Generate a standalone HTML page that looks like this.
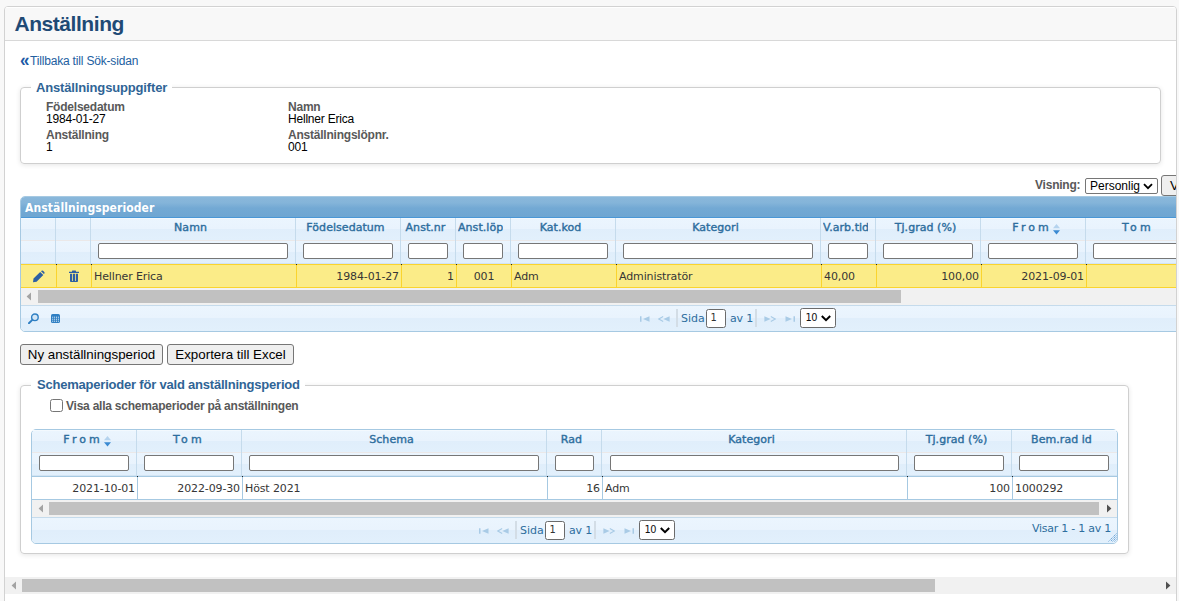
<!DOCTYPE html>
<html lang="sv">
<head>
<meta charset="utf-8">
<title>Anställning</title>
<style>
*{box-sizing:border-box}
html,body{margin:0;padding:0}
body{width:1179px;height:601px;overflow:hidden;background:#f8f8f8;font-family:"Liberation Sans",sans-serif;font-size:12px;color:#000;position:relative}
.abs{position:absolute}
#panel{position:absolute;left:4px;top:6px;width:1173px;height:620px;border:1px solid #d2d2d2;border-radius:4px;background:#fff;overflow:hidden}
#inner{position:absolute;left:-5px;top:-7px;width:1179px;height:601px}
#phead{position:absolute;left:5px;top:7px;width:1171px;height:34px;background:#f8f8f8;border-top:1px solid #fff;border-bottom:1px solid #d8d8d8}
h1{position:absolute;left:14.5px;top:12px;margin:0;font-size:21px;line-height:24px;font-weight:bold;color:#1f4a75;white-space:nowrap;letter-spacing:-0.45px}
a.back{position:absolute;left:30px;top:54px;font-size:12px;line-height:14px;color:#22609f;text-decoration:none;white-space:nowrap;letter-spacing:-0.18px}
a.back b{font-size:14px;font-weight:bold;color:#1f5a96}
.fs{position:absolute;border:1px solid #cfcfcf;border-radius:4px;box-shadow:0 1px 5px rgba(0,0,0,.10)}
.legend{position:absolute;background:#fff;font-weight:bold;font-size:13px;line-height:15px;color:#2f6496;white-space:nowrap;padding:0 5px;letter-spacing:-0.15px}
.lbl{position:absolute;font-weight:bold;color:#595959;font-size:12px;line-height:12px;white-space:nowrap;letter-spacing:-0.22px}
.val{position:absolute;color:#000;font-size:12px;line-height:12px;white-space:nowrap;letter-spacing:-0.2px}
.grid{font-family:"DejaVu Sans","Liberation Sans",sans-serif;font-size:11px}
.gbox{position:absolute;border:1px solid #a6c9e2;background:#fcfdfd}
.gtitle{position:absolute;background:linear-gradient(#8ab8db 0%,#84b4d9 30%,#73a9d4 55%,#6ea6d2 100%);border-bottom:1px solid #4a97d6;color:#fff;font-family:"DejaVu Sans Condensed","DejaVu Sans",sans-serif;font-weight:bold;font-size:12px;white-space:nowrap}
.hrow{position:absolute;background:linear-gradient(#ebf5fe 0%,#e9f3fd 49%,#e0eefb 50%,#e2f0fc 100%)}
.hsep{position:absolute;width:1px;background:#c5dbec}
.hl{position:absolute;text-align:center;color:#2e6e9e;font-size:11px;line-height:14px;white-space:nowrap;overflow:hidden;-webkit-text-stroke:0.4px #2e6e9e;letter-spacing:0.05px}
.si{position:absolute;height:16px;border:1px solid #767676;border-radius:2px;background:#fff}
.cell{position:absolute;font-size:11px;line-height:14px;color:#363636;white-space:nowrap;overflow:hidden;letter-spacing:-0.12px}
.sb{position:absolute;background:#f1f1f1}
.thumb{position:absolute;background:#c1c1c1}
.pager{position:absolute;background:linear-gradient(#ebf5fe 0%,#e9f3fd 49%,#e0eefb 50%,#e2f0fc 100%);border-top:1px solid #c5dbec}
.pt{position:absolute;color:#2e6e9e;font-size:11px;line-height:14px;white-space:nowrap}
.btn{position:absolute;height:21px;border:1px solid #767676;border-radius:3px;background:#efefef;color:#000;font-size:13.33px;line-height:19px;text-align:center;white-space:nowrap}
</style>
</head>
<body>
<div id="panel"><div id="inner">
<div id="phead"></div>
<h1>Anställning</h1>
<span class="abs" style="left:20px;top:50px;font-size:19px;line-height:20px;font-weight:bold;color:#1c5aa6;transform:scaleX(0.9);transform-origin:0 0">«</span>
<a class="back">Tillbaka till Sök-sidan</a>
<!-- fieldset 1 -->
<div class="fs" style="left:20px;top:87px;width:1141px;height:77px"></div>
<div class="legend" style="left:31px;top:80px">Anställningsuppgifter</div>
<div class="lbl" style="left:46px;top:101px">Födelsedatum</div>
<div class="val" style="left:46px;top:113px">1984-01-27</div>
<div class="lbl" style="left:288px;top:101px">Namn</div>
<div class="val" style="left:288px;top:113px">Hellner Erica</div>
<div class="lbl" style="left:46px;top:129px">Anställning</div>
<div class="val" style="left:46px;top:141px">1</div>
<div class="lbl" style="left:288px;top:129px">Anställningslöpnr.</div>
<div class="val" style="left:288px;top:141px">001</div>
<!-- visning -->
<div class="lbl" style="left:1035px;top:178px;line-height:14px">Visning:</div>
<div class="abs" style="left:1085px;top:178px;width:73px;height:16px;border:1px solid #767676;border-radius:2px;background:#fff;font-size:12px;line-height:14px;padding-left:4px;white-space:nowrap">Personlig<svg style="position:absolute;left:57px;top:4px" width="10" height="7" viewBox="0 0 10 7"><path d="M1 1.2 L5 5.2 L9 1.2" fill="none" stroke="#000" stroke-width="1.8"/></svg></div>
<div class="btn" style="left:1161px;top:175px;width:60px;text-align:left;padding-left:8px">Visa</div>
<!-- grid 1 -->
<div class="grid">
<div class="gbox" style="left:20px;top:196px;width:1200px;height:136px;border-radius:5px"></div>
<div class="gtitle" style="left:21px;top:197px;width:1200px;height:21px;border-top-left-radius:4px;padding-left:4px;line-height:22px;letter-spacing:0.1px">Anställningsperioder</div>
<div class="hrow" style="left:21px;top:218px;width:1200px;height:22px"></div>
<div class="abs" style="left:21px;top:240px;width:1200px;height:1px;background:#ebe8e8"></div>
<div class="hrow" style="left:21px;top:241px;width:1200px;height:23px"></div>
<div class="abs" style="left:21px;top:263px;width:1200px;height:1px;background:#d2e4f3"></div>
<div class="abs" style="left:21px;top:218px;width:1200px;height:1px;background:#f3f9fe"></div>
<div class="hsep" style="left:55px;top:218px;height:46px"></div>
<div class="hsep" style="left:90px;top:218px;height:46px"></div>
<div class="hsep" style="left:295px;top:218px;height:46px"></div>
<div class="hl" style="left:93px;top:221px;width:195px">Namn</div>
<div class="si" style="left:98px;top:243px;width:190px"></div>
<div class="hsep" style="left:400px;top:218px;height:46px"></div>
<div class="hl" style="left:298px;top:221px;width:95px">Födelsedatum</div>
<div class="si" style="left:303px;top:243px;width:90px"></div>
<div class="hsep" style="left:455px;top:218px;height:46px"></div>
<div class="hl" style="left:403px;top:221px;width:45px">Anst.nr</div>
<div class="si" style="left:408px;top:243px;width:40px"></div>
<div class="hsep" style="left:510px;top:218px;height:46px"></div>
<div class="hl" style="left:458px;top:221px;width:45px">Anst.löp</div>
<div class="si" style="left:463px;top:243px;width:40px"></div>
<div class="hsep" style="left:615px;top:218px;height:46px"></div>
<div class="hl" style="left:513px;top:221px;width:95px">Kat.kod</div>
<div class="si" style="left:518px;top:243px;width:90px"></div>
<div class="hsep" style="left:820px;top:218px;height:46px"></div>
<div class="hl" style="left:618px;top:221px;width:195px">Kategori</div>
<div class="si" style="left:623px;top:243px;width:190px"></div>
<div class="hsep" style="left:875px;top:218px;height:46px"></div>
<div class="hl" style="left:823px;top:221px;width:45px">V.arb.tid</div>
<div class="si" style="left:828px;top:243px;width:40px"></div>
<div class="hsep" style="left:980px;top:218px;height:46px"></div>
<div class="hl" style="left:878px;top:221px;width:95px">Tj.grad (%)</div>
<div class="si" style="left:883px;top:243px;width:90px"></div>
<div class="hsep" style="left:1085px;top:218px;height:46px"></div>
<div class="hl" style="left:983px;top:221px;width:95px;letter-spacing:3px;padding-left:3px">From</div>
<svg class="abs" style="left:1053px;top:224px" width="7" height="11" viewBox="0 0 7 11"><path d="M3.5 0 L7 4.3 H0 Z" fill="#b5d3ee"/><path d="M0 6.2 H7 L3.5 10.6 Z" fill="#3b8ad2"/></svg>
<div class="si" style="left:988px;top:243px;width:90px"></div>
<div class="hsep" style="left:1190px;top:218px;height:46px"></div>
<div class="hl" style="left:1088px;top:221px;width:95px;letter-spacing:3.2px;padding-left:5px">Tom</div>
<div class="si" style="left:1093px;top:243px;width:90px"></div>
<div class="abs" style="left:21px;top:264px;width:1200px;height:24px;background:#fbec88;border-top:1px solid #fad42e;border-bottom:1px solid #fad42e"></div>
<div class="abs" style="left:56px;top:264px;width:1px;height:24px;background:#fad42e"></div>
<div class="abs" style="left:56px;top:264px;width:1px;height:1px;background:#222"></div>
<div class="abs" style="left:91px;top:264px;width:1px;height:24px;background:#fad42e"></div>
<div class="abs" style="left:91px;top:264px;width:1px;height:1px;background:#222"></div>
<div class="abs" style="left:296px;top:264px;width:1px;height:24px;background:#fad42e"></div>
<div class="abs" style="left:296px;top:264px;width:1px;height:1px;background:#222"></div>
<div class="abs" style="left:401px;top:264px;width:1px;height:24px;background:#fad42e"></div>
<div class="abs" style="left:401px;top:264px;width:1px;height:1px;background:#222"></div>
<div class="abs" style="left:456px;top:264px;width:1px;height:24px;background:#fad42e"></div>
<div class="abs" style="left:456px;top:264px;width:1px;height:1px;background:#222"></div>
<div class="abs" style="left:511px;top:264px;width:1px;height:24px;background:#fad42e"></div>
<div class="abs" style="left:511px;top:264px;width:1px;height:1px;background:#222"></div>
<div class="abs" style="left:616px;top:264px;width:1px;height:24px;background:#fad42e"></div>
<div class="abs" style="left:616px;top:264px;width:1px;height:1px;background:#222"></div>
<div class="abs" style="left:821px;top:264px;width:1px;height:24px;background:#fad42e"></div>
<div class="abs" style="left:821px;top:264px;width:1px;height:1px;background:#222"></div>
<div class="abs" style="left:876px;top:264px;width:1px;height:24px;background:#fad42e"></div>
<div class="abs" style="left:876px;top:264px;width:1px;height:1px;background:#222"></div>
<div class="abs" style="left:981px;top:264px;width:1px;height:24px;background:#fad42e"></div>
<div class="abs" style="left:981px;top:264px;width:1px;height:1px;background:#222"></div>
<div class="abs" style="left:1086px;top:264px;width:1px;height:24px;background:#fad42e"></div>
<div class="abs" style="left:1086px;top:264px;width:1px;height:1px;background:#222"></div>
<div class="abs" style="left:1191px;top:264px;width:1px;height:24px;background:#fad42e"></div>
<div class="abs" style="left:1191px;top:264px;width:1px;height:1px;background:#222"></div>
<div class="cell" style="left:92px;top:270px;width:204px;text-align:left;padding-left:2px">Hellner Erica</div>
<div class="cell" style="left:297px;top:270px;width:104px;text-align:right;padding-right:2px">1984-01-27</div>
<div class="cell" style="left:402px;top:270px;width:54px;text-align:right;padding-right:2px">1</div>
<div class="cell" style="left:457px;top:270px;width:54px;text-align:center;">001</div>
<div class="cell" style="left:512px;top:270px;width:104px;text-align:left;padding-left:2px">Adm</div>
<div class="cell" style="left:617px;top:270px;width:204px;text-align:left;padding-left:2px">Administratör</div>
<div class="cell" style="left:822px;top:270px;width:54px;text-align:left;padding-left:2px">40,00</div>
<div class="cell" style="left:877px;top:270px;width:104px;text-align:right;padding-right:2px">100,00</div>
<div class="cell" style="left:982px;top:270px;width:104px;text-align:right;padding-right:2px">2021-09-01</div>
<svg class="abs" style="left:32px;top:270px" width="13" height="13" viewBox="0 0 13 13"><path d="M1 12.2 L1.5 8.6 L8.2 1.9 L11.3 5 L4.6 11.7 Z M9 1.2 L9.6 0.7 Q10.3 0.2 11 0.8 L12.3 2.1 Q12.9 2.8 12.4 3.5 L11.9 4.1 Z" fill="#2c5fa3"/></svg>
<svg class="abs" style="left:69px;top:270px" width="10" height="13" viewBox="0 0 10 13"><path d="M0 1.7 H3 V0.9 Q3 0.4 3.5 0.4 H6.5 Q7 0.4 7 0.9 V1.7 H10 V2.9 H0 Z" fill="#2c5fa3"/><path d="M1 3.8 H3.2 V12 H1.9 Q1 12 1 11.1 Z M4 3.8 H6 V12 H4 Z M6.8 3.8 H9 V11.1 Q9 12 8.1 12 H6.8 Z M1.5 11 H8.5 V12 H1.5 Z" fill="#2c5fa3"/></svg>
<div class="sb" style="left:21px;top:288px;width:1200px;height:17px"></div>
<div class="thumb" style="left:38px;top:290px;width:863px;height:13px"></div>
<svg class="abs" style="left:26px;top:292px" width="5" height="9" viewBox="0 0 5 9"><path d="M5 0.5 L0.6 4.5 L5 8.5 Z" fill="#a3a3a3"/></svg>
<div class="pager" style="left:21px;top:305px;width:1200px;height:26px;border-bottom-left-radius:4px"></div>
<svg class="abs" style="left:28px;top:313px" width="11" height="11" viewBox="0 0 11 11"><circle cx="6.9" cy="4.3" r="3.3" fill="#d3e6f6" stroke="#2f7fc3" stroke-width="1.4"/><path d="M4.3 6.9 L0.9 10.2" stroke="#2f7fc3" stroke-width="1.9" stroke-linecap="round"/></svg>
<svg class="abs" style="left:51px;top:314px" width="9" height="9" viewBox="0 0 9 9"><rect x="0" y="0" width="9" height="9" rx="1.6" fill="#2f7fc3"/><rect x="1.2" y="2.7" width="1" height="1" fill="#e8f2fb"/><rect x="3.1" y="2.7" width="1" height="1" fill="#e8f2fb"/><rect x="5" y="2.7" width="1" height="1" fill="#e8f2fb"/><rect x="6.9" y="2.7" width="1" height="1" fill="#e8f2fb"/><rect x="1.2" y="4.7" width="1" height="1" fill="#e8f2fb"/><rect x="3.1" y="4.7" width="1" height="1" fill="#e8f2fb"/><rect x="5" y="4.7" width="1" height="1" fill="#e8f2fb"/><rect x="6.9" y="4.7" width="1" height="1" fill="#e8f2fb"/><rect x="1.2" y="6.7" width="1" height="1" fill="#e8f2fb"/><rect x="3.1" y="6.7" width="1" height="1" fill="#e8f2fb"/><rect x="5" y="6.7" width="1" height="1" fill="#e8f2fb"/><rect x="6.9" y="6.7" width="1" height="1" fill="#e8f2fb"/></svg>
<svg class="abs" style="left:639.5px;top:315.7px" width="10" height="6" viewBox="0 0 10 6"><path d="M0 0.3 H1.5 V5.7 H0 Z M9.5 0.3 L3 3 L9.5 5.7 Z" fill="#a9cbe6"/></svg>
<svg class="abs" style="left:658px;top:315.7px" width="12" height="6" viewBox="0 0 12 6"><path d="M5.2 0.6 L0.8 3 L5.2 5.4" fill="none" stroke="#a9cbe6" stroke-width="1.1"/><path d="M11.6 0.3 L5.4 3 L11.6 5.7 Z" fill="#a9cbe6"/></svg>
<div class="abs" style="left:676px;top:309px;width:2px;height:18px;background:#d3dde6"></div>
<div class="pt" style="left:681px;top:312px">Sida</div>
<div class="abs" style="left:706px;top:309px;width:20px;height:19px;border:1px solid #6b6b6b;border-radius:2.5px;background:#fff;font-size:9.8px;line-height:14px;padding:1px 0 0 3.5px;color:#333">1</div>
<div class="pt" style="left:730px;top:312px;letter-spacing:-0.2px">av 1</div>
<div class="abs" style="left:755px;top:309px;width:2px;height:18px;background:#d3dde6"></div>
<svg class="abs" style="left:764px;top:315.7px" width="12" height="6" viewBox="0 0 12 6"><path d="M0.4 0.3 L6.6 3 L0.4 5.7 Z" fill="#a9cbe6"/><path d="M6.8 0.6 L11.2 3 L6.8 5.4" fill="none" stroke="#a9cbe6" stroke-width="1.1"/></svg>
<svg class="abs" style="left:784.5px;top:315.7px" width="10" height="6" viewBox="0 0 10 6"><path d="M8.5 0.3 H10 V5.7 H8.5 Z M0.5 0.3 L7 3 L0.5 5.7 Z" fill="#a9cbe6"/></svg>
<div class="abs" style="left:800px;top:308px;width:36px;height:20px;border:1px solid #6b6b6b;border-radius:2.5px;background:#fff;font-size:9.8px;line-height:16px;padding:1px 0 0 4.5px;color:#111;letter-spacing:-0.5px">10<svg style="position:absolute;left:19.5px;top:6px" width="10" height="7" viewBox="0 0 10 7"><path d="M0.8 1 L5 5.2 L9.2 1" fill="none" stroke="#000" stroke-width="2"/></svg></div>
</div>
<!-- buttons -->
<div class="btn" style="left:20px;top:344px;width:143px">Ny anställningsperiod</div>
<div class="btn" style="left:167px;top:344px;width:127px">Exportera till Excel</div>
<!-- fieldset 2 -->
<div class="fs" style="left:20px;top:385px;width:1109px;height:169px"></div>
<div class="legend" style="left:31px;top:377px;padding-left:6px;letter-spacing:-0.21px">Schemaperioder för vald anställningsperiod</div>
<div class="abs" style="left:50px;top:399px;width:13px;height:13px;border:1px solid #767676;border-radius:2.5px;background:#fff"></div>
<div class="lbl" style="left:66px;top:399px;line-height:14px;letter-spacing:-0.23px">Visa alla schemaperioder på anställningen</div>
<!-- grid 2 -->
<div class="grid">
<div class="gbox" style="left:31px;top:429px;width:1087px;height:115px;border-radius:5px"></div>
<div class="hrow" style="left:32px;top:430px;width:1085px;height:22px;border-radius:4px 4px 0 0"></div>
<div class="abs" style="left:32px;top:452px;width:1085px;height:1px;background:#ebe8e8"></div>
<div class="hrow" style="left:32px;top:453px;width:1085px;height:23px"></div>
<div class="abs" style="left:32px;top:475px;width:1085px;height:1px;background:#d2e4f3"></div>
<div class="abs" style="left:32px;top:430px;width:1085px;height:1px;background:#f3f9fe;border-radius:4px 4px 0 0"></div>
<div class="hsep" style="left:136px;top:430px;height:46px"></div>
<div class="hl" style="left:34px;top:433px;width:95px;letter-spacing:3px;padding-left:3px">From</div>
<svg class="abs" style="left:104px;top:436px" width="7" height="11" viewBox="0 0 7 11"><path d="M3.5 0 L7 4.3 H0 Z" fill="#b5d3ee"/><path d="M0 6.2 H7 L3.5 10.6 Z" fill="#3b8ad2"/></svg>
<div class="si" style="left:39px;top:455px;width:90px"></div>
<div class="hsep" style="left:241px;top:430px;height:46px"></div>
<div class="hl" style="left:139px;top:433px;width:95px;letter-spacing:3.2px;padding-left:5px">Tom</div>
<div class="si" style="left:144px;top:455px;width:90px"></div>
<div class="hsep" style="left:546px;top:430px;height:46px"></div>
<div class="hl" style="left:244px;top:433px;width:295px">Schema</div>
<div class="si" style="left:249px;top:455px;width:290px"></div>
<div class="hsep" style="left:601px;top:430px;height:46px"></div>
<div class="hl" style="left:549px;top:433px;width:45px">Rad</div>
<div class="si" style="left:555px;top:455px;width:39px"></div>
<div class="hsep" style="left:906px;top:430px;height:46px"></div>
<div class="hl" style="left:604px;top:433px;width:295px">Kategori</div>
<div class="si" style="left:610px;top:455px;width:289px"></div>
<div class="hsep" style="left:1011px;top:430px;height:46px"></div>
<div class="hl" style="left:909px;top:433px;width:95px">Tj.grad (%)</div>
<div class="si" style="left:914px;top:455px;width:90px"></div>
<div class="hl" style="left:1014px;top:433px;width:95px">Bem.rad id</div>
<div class="si" style="left:1019px;top:455px;width:90px"></div>
<div class="abs" style="left:32px;top:476px;width:1085px;height:24px;background:#fff;border-top:1px solid #a6c9e2;border-bottom:1px solid #a6c9e2"></div>
<div class="abs" style="left:137px;top:476px;width:1px;height:24px;background:#a6c9e2"></div>
<div class="abs" style="left:137px;top:476px;width:1px;height:1px;background:#222"></div>
<div class="abs" style="left:242px;top:476px;width:1px;height:24px;background:#a6c9e2"></div>
<div class="abs" style="left:242px;top:476px;width:1px;height:1px;background:#222"></div>
<div class="abs" style="left:547px;top:476px;width:1px;height:24px;background:#a6c9e2"></div>
<div class="abs" style="left:547px;top:476px;width:1px;height:1px;background:#222"></div>
<div class="abs" style="left:602px;top:476px;width:1px;height:24px;background:#a6c9e2"></div>
<div class="abs" style="left:602px;top:476px;width:1px;height:1px;background:#222"></div>
<div class="abs" style="left:907px;top:476px;width:1px;height:24px;background:#a6c9e2"></div>
<div class="abs" style="left:907px;top:476px;width:1px;height:1px;background:#222"></div>
<div class="abs" style="left:1012px;top:476px;width:1px;height:24px;background:#a6c9e2"></div>
<div class="abs" style="left:1012px;top:476px;width:1px;height:1px;background:#222"></div>
<div class="cell" style="left:33px;top:482px;width:104px;text-align:right;padding-right:2px">2021-10-01</div>
<div class="cell" style="left:138px;top:482px;width:104px;text-align:right;padding-right:2px">2022-09-30</div>
<div class="cell" style="left:243px;top:482px;width:304px;text-align:left;padding-left:2px">Höst 2021</div>
<div class="cell" style="left:548px;top:482px;width:54px;text-align:right;padding-right:2px">16</div>
<div class="cell" style="left:603px;top:482px;width:304px;text-align:left;padding-left:2px">Adm</div>
<div class="cell" style="left:908px;top:482px;width:104px;text-align:right;padding-right:2px">100</div>
<div class="cell" style="left:1013px;top:482px;width:104px;text-align:left;padding-left:2px">1000292</div>
<div class="sb" style="left:32px;top:500px;width:1085px;height:17px"></div>
<div class="thumb" style="left:49px;top:502px;width:1050px;height:13px"></div>
<svg class="abs" style="left:38px;top:504px" width="5" height="9" viewBox="0 0 5 9"><path d="M5 0.5 L0.6 4.5 L5 8.5 Z" fill="#a3a3a3"/></svg>
<svg class="abs" style="left:1107px;top:504px" width="5" height="9" viewBox="0 0 5 9"><path d="M0 0.5 L4.4 4.5 L0 8.5 Z" fill="#505050"/></svg>
<div class="pager" style="left:32px;top:517px;width:1085px;height:26px;border-radius:0 0 4px 4px"></div>
<svg class="abs" style="left:478.5px;top:527.7px" width="10" height="6" viewBox="0 0 10 6"><path d="M0 0.3 H1.5 V5.7 H0 Z M9.5 0.3 L3 3 L9.5 5.7 Z" fill="#a9cbe6"/></svg>
<svg class="abs" style="left:497px;top:527.7px" width="12" height="6" viewBox="0 0 12 6"><path d="M5.2 0.6 L0.8 3 L5.2 5.4" fill="none" stroke="#a9cbe6" stroke-width="1.1"/><path d="M11.6 0.3 L5.4 3 L11.6 5.7 Z" fill="#a9cbe6"/></svg>
<div class="abs" style="left:515px;top:521px;width:2px;height:18px;background:#d3dde6"></div>
<div class="pt" style="left:520px;top:524px">Sida</div>
<div class="abs" style="left:545px;top:521px;width:20px;height:19px;border:1px solid #6b6b6b;border-radius:2.5px;background:#fff;font-size:9.8px;line-height:14px;padding:1px 0 0 3.5px;color:#333">1</div>
<div class="pt" style="left:569px;top:524px;letter-spacing:-0.2px">av 1</div>
<div class="abs" style="left:594px;top:521px;width:2px;height:18px;background:#d3dde6"></div>
<svg class="abs" style="left:603px;top:527.7px" width="12" height="6" viewBox="0 0 12 6"><path d="M0.4 0.3 L6.6 3 L0.4 5.7 Z" fill="#a9cbe6"/><path d="M6.8 0.6 L11.2 3 L6.8 5.4" fill="none" stroke="#a9cbe6" stroke-width="1.1"/></svg>
<svg class="abs" style="left:623.5px;top:527.7px" width="10" height="6" viewBox="0 0 10 6"><path d="M8.5 0.3 H10 V5.7 H8.5 Z M0.5 0.3 L7 3 L0.5 5.7 Z" fill="#a9cbe6"/></svg>
<div class="abs" style="left:639px;top:520px;width:36px;height:20px;border:1px solid #6b6b6b;border-radius:2.5px;background:#fff;font-size:9.8px;line-height:16px;padding:1px 0 0 4.5px;color:#111;letter-spacing:-0.5px">10<svg style="position:absolute;left:19.5px;top:6px" width="10" height="7" viewBox="0 0 10 7"><path d="M0.8 1 L5 5.2 L9.2 1" fill="none" stroke="#000" stroke-width="2"/></svg></div>
<div class="pt" style="left:900px;top:522px;width:211px;text-align:right;letter-spacing:-0.25px">Visar 1 - 1 av 1</div>
<svg class="abs" style="left:1106.5px;top:532px" width="10" height="10" viewBox="0 0 10 10"><path d="M9.5 1.5 L1.5 9.5 M9.5 3.5 L3.5 9.5 M9.5 5.5 L5.5 9.5 M9.5 7.5 L7.5 9.5" stroke="#6ea6d8" stroke-width="1" stroke-dasharray="1.4 0.7"/></svg>
</div>
<!-- page scrollbar -->
<div class="sb" style="left:5px;top:577px;width:1171px;height:17px"></div>
<div class="thumb" style="left:22px;top:579px;width:913px;height:13px"></div>
<svg class="abs" style="left:11px;top:581px" width="5" height="9" viewBox="0 0 5 9"><path d="M5 0.5 L0.6 4.5 L5 8.5 Z" fill="#a3a3a3"/></svg>
<svg class="abs" style="left:1166px;top:581px" width="5" height="9" viewBox="0 0 5 9"><path d="M0 0.5 L4.4 4.5 L0 8.5 Z" fill="#505050"/></svg>
</div></div>
</body>
</html>
